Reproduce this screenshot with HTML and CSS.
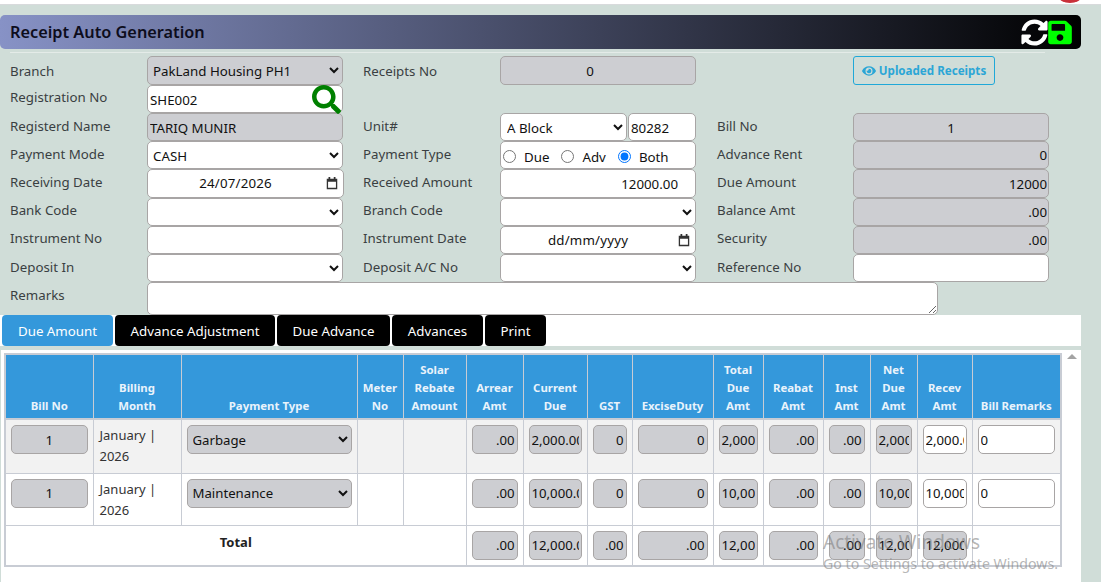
FILE: index.html
```html
<!DOCTYPE html>
<html>
<head>
  <title>Receipt Auto Generation</title>
  <link rel="stylesheet" href="styles.css">
  <meta charset="utf-8">
</head>
<body>
  <div class="topline"><span class="topdot"></span></div>
  <div class="wrap">
    <div class="titlebar">
      <h1>Receipt Auto Generation</h1>
      <div class="titleicons">
        <svg class="ic-sync" viewBox="0 0 512 512"><path d="M370.72 133.28C339.458 104.008 298.888 87.962 255.848 88c-77.458.068-144.328 53.178-162.791 126.85-1.344 5.363-6.122 9.15-11.651 9.15H24.103c-7.498 0-13.194-6.807-11.807-14.176C33.933 94.924 134.813 8 256 8c66.448 0 126.791 26.136 171.315 68.685L463.03 40.97C478.149 25.851 504 36.559 504 57.941V192c0 13.255-10.745 24-24 24H345.941c-21.382 0-32.09-25.851-16.971-40.971l41.75-41.749zM32 296h134.059c21.382 0 32.09 25.851 16.971 40.971l-41.75 41.75c31.262 29.273 71.835 45.319 114.876 45.28 77.418-.07 144.315-53.144 162.787-126.849 1.344-5.363 6.122-9.15 11.651-9.15h57.304c7.498 0 13.194 6.807 11.807 14.176C478.067 417.076 377.187 504 256 504c-66.448 0-126.791-26.136-171.315-68.685L48.97 471.03C33.851 486.149 8 475.441 8 454.059V320c0-13.255 10.745-24 24-24z"/></svg>
        <svg class="ic-save" viewBox="0 0 448 512"><path d="M433.941 129.941l-83.882-83.882A48 48 0 0 0 316.118 32H48C21.49 32 0 53.49 0 80v352c0 26.51 21.49 48 48 48h352c26.51 0 48-21.49 48-48V163.882a48 48 0 0 0-14.059-33.941zM224 416c-35.346 0-64-28.654-64-64 0-35.346 28.654-64 64-64s64 28.654 64 64c0 35.346-28.654 64-64 64zm96-304.52V212c0 6.627-5.373 12-12 12H76c-6.627 0-12-5.373-12-12V108c0-6.627 5.373-12 12-12h228.52c3.183 0 6.235 1.264 8.485 3.515l3.48 3.48A11.996 11.996 0 0 1 320 111.48z"/></svg>
      </div>
    </div>
    <hr class="titlerule">

    <div class="formgrid">
      <label class="top">Branch</label>
      <select class="fld ro top"><option>PakLand Housing PH1</option></select>
      <label class="top mid">Receipts No</label>
      <input class="fld ro center top shiftl" type="text" value="0">
      <span></span>
      <a class="upbtn">
        <svg viewBox="0 0 576 512"><path d="M572.52 241.4C518.29 135.59 410.93 64 288 64S57.68 135.64 3.48 241.41a32.35 32.35 0 0 0 0 29.19C57.71 376.41 165.07 448 288 448s230.32-71.64 284.52-177.41a32.35 32.35 0 0 0 0-29.19zM288 400a144 144 0 1 1 144-144 143.93 143.93 0 0 1-144 144zm0-240a95.31 95.31 0 0 0-25.31 3.79 47.85 47.85 0 0 1-66.9 66.9A95.78 95.78 0 1 0 288 160z"/></svg>
        Uploaded Receipts
      </a>

      <label class="up">Registration No</label>
      <div class="searchbox">
        <input class="fld" type="text" value="SHE002">
        <svg viewBox="0 0 512 512"><path d="M505 442.7L405.3 343c-4.5-4.5-10.6-7-17-7H372c27.6-35.3 44-79.7 44-128C416 93.1 322.9 0 208 0S0 93.1 0 208s93.1 208 208 208c48.3 0 92.7-16.4 128-44v16.3c0 6.4 2.5 12.5 7 17l99.7 99.7c9.4 9.4 24.6 9.4 33.9 0l28.3-28.3c9.4-9.4 9.4-24.6.1-34zM208 336c-70.7 0-128-57.2-128-128 0-70.7 57.2-128 128-128 70.7 0 128 57.2 128 128 0 70.7-57.2 128-128 128z"/></svg>
      </div>
      <span></span><span></span><span></span><span></span>

      <label>Registerd Name</label>
      <input class="fld ro" type="text" value="TARIQ MUNIR">
      <label class="mid">Unit#</label>
      <div class="unitbox">
        <select class="fld"><option>A Block</option></select>
        <input class="fld" type="text" value="80282">
      </div>
      <label class="far">Bill No</label>
      <input class="fld ro center" type="text" value="1">

      <label>Payment Mode</label>
      <select class="fld"><option>CASH</option></select>
      <label class="mid">Payment Type</label>
      <div class="fld radios">
        <input type="radio" name="ptype"><span>Due</span>
        <input type="radio" name="ptype"><span>Adv</span>
        <input type="radio" name="ptype" checked><span>Both</span>
      </div>
      <label class="far">Advance Rent</label>
      <input class="fld ro right" type="text" value="0">

      <label>Receiving Date</label>
      <div class="fld datebox date-wide"><span>24/07/2026</span>
        <svg viewBox="0 0 16 16"><path d="M4 1h2v2h4V1h2v2h2v12H2V3h2zM3.5 6.5v7h9v-7z"/></svg>
      </div>
      <label class="mid">Received Amount</label>
      <input class="fld right pad" type="text" value="12000.00">
      <label class="far">Due Amount</label>
      <input class="fld ro right" type="text" value="12000">

      <label class="up">Bank Code</label>
      <select class="fld"><option></option></select>
      <label class="up mid">Branch Code</label>
      <select class="fld"><option></option></select>
      <label class="up far">Balance Amt</label>
      <input class="fld ro right" type="text" value=".00">

      <label class="up">Instrument No</label>
      <input class="fld" type="text">
      <label class="up mid">Instrument Date</label>
      <div class="fld datebox"><span>dd/mm/yyyy</span>
        <svg viewBox="0 0 16 16"><path d="M4 1h2v2h4V1h2v2h2v12H2V3h2zM3.5 6.5v7h9v-7z"/></svg>
      </div>
      <label class="up far">Security</label>
      <input class="fld ro right" type="text" value=".00">

      <label>Deposit In</label>
      <select class="fld"><option></option></select>
      <label class="mid">Deposit A/C No</label>
      <select class="fld"><option></option></select>
      <label class="far">Reference No</label>
      <input class="fld" type="text">

      <label>Remarks</label>
      <textarea class="fld remarks"></textarea>
    </div>

    <div class="tabs">
      <a class="tab active">Due Amount</a>
      <a class="tab">Advance Adjustment</a>
      <a class="tab">Due Advance</a>
      <a class="tab">Advances</a>
      <a class="tab">Print</a>
    </div>

    <div class="panel">
      <div class="scroller">
        <table class="bills">
          <colgroup>
            <col class="c1"><col class="c2"><col class="c3"><col class="c4"><col class="c5">
            <col class="c6"><col class="c7"><col class="c8"><col class="c9"><col class="c10">
            <col class="c11"><col class="c12"><col class="c13"><col class="c14"><col class="c15">
          </colgroup>
          <thead>
            <tr>
              <th>Bill No</th><th>Billing<br>Month</th><th>Payment Type</th><th>Meter No</th>
              <th>Solar Rebate Amount</th><th>Arrear Amt</th><th>Current Due</th><th>GST</th>
              <th>ExciseDuty</th><th>Total Due Amt</th><th>Reabat Amt</th><th>Inst Amt</th>
              <th>Net Due Amt</th><th>Recev Amt</th><th>Bill Remarks</th>
            </tr>
          </thead>
          <tbody>
            <tr class="odd">
              <td><input class="cell ro center" value="1"></td>
              <td class="month">January | 2026</td>
              <td><select class="cell ro"><option>Garbage</option></select></td>
              <td></td><td></td>
              <td><input class="cell ro right" value=".00"></td>
              <td><input class="cell ro right" value="2,000.00"></td>
              <td><input class="cell ro right" value="0"></td>
              <td><input class="cell ro right" value="0"></td>
              <td><input class="cell ro right" value="2,000.00"></td>
              <td><input class="cell ro right" value=".00"></td>
              <td><input class="cell ro right" value=".00"></td>
              <td><input class="cell ro right" value="2,000.00"></td>
              <td><input class="cell right" value="2,000.00"></td>
              <td><input class="cell" value="0"></td>
            </tr>
            <tr class="even">
              <td><input class="cell ro center" value="1"></td>
              <td class="month">January | 2026</td>
              <td><select class="cell ro"><option>Maintenance</option></select></td>
              <td></td><td></td>
              <td><input class="cell ro right" value=".00"></td>
              <td><input class="cell ro right" value="10,000.00"></td>
              <td><input class="cell ro right" value="0"></td>
              <td><input class="cell ro right" value="0"></td>
              <td><input class="cell ro right" value="10,000.00"></td>
              <td><input class="cell ro right" value=".00"></td>
              <td><input class="cell ro right" value=".00"></td>
              <td><input class="cell ro right" value="10,000.00"></td>
              <td><input class="cell right" value="10,000.00"></td>
              <td><input class="cell" value="0"></td>
            </tr>
            <tr class="totals">
              <td colspan="5" class="totlabel">Total</td>
              <td><input class="cell ro right" value=".00"></td>
              <td><input class="cell ro right" value="12,000.00"></td>
              <td><input class="cell ro right" value=".00"></td>
              <td><input class="cell ro right" value=".00"></td>
              <td><input class="cell ro right" value="12,000.00"></td>
              <td><input class="cell ro right" value=".00"></td>
              <td><input class="cell ro right" value=".00"></td>
              <td><input class="cell ro right" value="12,000.00"></td>
              <td><input class="cell ro right" value="12,000.00"></td>
              <td></td>
            </tr>
          </tbody>
        </table>
        <div class="scrollbar"><span class="uparrow"></span></div>
      </div>
    </div>
  </div>
  <div class="watermark">
    <div class="wm1">Activate Windows</div>
    <div class="wm2">Go to Settings to activate Windows.</div>
  </div>
</body>
</html>
```

FILE: styles.css
```css
html, body {
  margin: 0;
  height: 582px;
  overflow: hidden;
}
body {
  background: #d0ddd8;
  color: #333;
  font-family: "Noto Sans", Arial, sans-serif;
  font-size: 13.3px;
  position: relative;
}
* { box-sizing: border-box; }

.topline {
  height: 5px;
  background: #fff;
  border-bottom: 1px solid #d8dadc;
  position: relative;
  overflow: hidden;
}
.topdot {
  position: absolute;
  left: 1059px;
  top: -9px;
  width: 22px;
  height: 12px;
  border-radius: 50%;
  background: #c9303a;
}

.wrap { width: 1081px; padding-top: 10px; }

.titlebar {
  height: 34px;
  display: flex;
  align-items: center;
  justify-content: space-between;
  padding: 0 9px 0 10px;
  border-radius: 5px;
  background: linear-gradient(to right, #8792c6, #000);
}
.titlebar h1 {
  margin: 0;
  font-size: 16.3px;
  font-weight: 600;
  color: #0d0d1c;
}
.titleicons { display: flex; align-items: center; }
.ic-sync { width: 27px; height: 27px; fill: #fff; }
.ic-save { width: 24px; height: 27px; fill: #0f0; }

.titlerule {
  margin: 3px 36px 0 10px;
  border: 0;
  border-top: 1px solid #e4ebe8;
}

.formgrid {
  display: grid;
  grid-template-columns: 147px 196px 157px 196px 157px 196px;
  grid-template-rows: 29px 28px 28px 28px 29px 28px 28px 28px 33px;
  padding: 3px 0 0 0;
  align-items: stretch;
}
.formgrid label {
  padding-left: 10px;
  line-height: 27px;
  color: #3a3f42;
  white-space: nowrap;
}
.formgrid label.mid { padding-left: 20px; }
.formgrid label.far { padding-left: 21px; }
.formgrid label.top { line-height: 30px; }
.formgrid label.up { line-height: 25px; }

.fld {
  width: 100%;
  min-width: 0;
  height: 100%;
  margin: 0;
  padding: 2px 2px 0;
  background: #fff;
  color: #111;
  border: 1px solid #a8a5a5;
  border-radius: 5px;
  font: inherit;
  font-size: 13.3px;
}
select.fld { padding: 2px 1px 0; }
.fld.top { padding-top: 0; }
.ro { background: #cdced2; }
.center { text-align: center; }
.right { text-align: right; padding-top: 0; padding-right: 1px; }
.pad { padding-right: 17px; }
.shiftl { padding-right: 18px; }

.upbtn {
  display: flex;
  align-items: center;
  justify-content: center;
  gap: 3px;
  width: 142px;
  height: 29px;
  border: 1px solid #1fa8d8;
  border-radius: 3px;
  color: #2ba6d6;
  font-size: 11.6px;
  font-weight: 700;
}
.upbtn svg { width: 14px; height: 14px; fill: #2ba6d6; }

.searchbox { position: relative; }
.searchbox svg {
  position: absolute;
  right: 2px;
  top: 0;
  width: 29px;
  height: 29px;
  fill: #008000;
}

.unitbox { display: flex; gap: 1px; }
.unitbox select { flex: 0 0 127px; width: 127px; padding-left: 2px; }
.unitbox input { flex: 1; }

.radios {
  display: flex;
  align-items: center;
  padding: 0 0 0 2px;
}
.radios input { margin: 2px 8px 0 0; width: 13px; height: 13px; flex: none; }
.radios span { margin-right: 12px; padding-top: 4px; }

.datebox {
  display: flex;
  align-items: center;
  justify-content: center;
  position: relative;
  letter-spacing: .2px;
  padding: 0 20px 0 0;
}
.datebox svg {
  position: absolute;
  right: 4px;
  top: 6px;
  width: 14px;
  height: 14px;
  fill: #333;
}
.date-wide { width: 197px; padding-bottom: 2px; }

.remarks {
  grid-column: 2 / 6;
  width: 791px;
  resize: both;
  display: block;
}

.tabs {
  display: flex;
  gap: 2px;
  height: 31px;
  padding-left: 2px;
  background: #fff;
}
.tab {
  display: flex;
  align-items: center;
  justify-content: center;
  background: #000;
  color: #fff;
  border-radius: 4px;
  font-size: 13.3px;
}
.tab:nth-child(1) { width: 111px; }
.tab:nth-child(2) { width: 160px; }
.tab:nth-child(3) { width: 113px; }
.tab:nth-child(4) { width: 91px; }
.tab:nth-child(5) { width: 61px; }
.tab.active { background: #3498db; }

.panel {
  margin: 4px 0 0 1px;
  height: 240px;
  background: #fff;
}
.scroller {
  display: flex;
  padding: 3px 0 0 3px;
}

.bills {
  width: 1058px;
  flex: none;
  table-layout: fixed;
  border-collapse: collapse;
  border: 2px solid #c8ccd4;
  font-size: 13px;
  align-self: flex-start;
}
.c1 { width: 88px; }
.c2 { width: 88px; }
.c3 { width: 176px; }
.c4 { width: 46px; }
.c5 { width: 63px; }
.c6 { width: 57px; }
.c7 { width: 64px; }
.c8 { width: 45px; }
.c9 { width: 81px; }
.c10 { width: 50px; }
.c11 { width: 60px; }
.c12 { width: 47px; }
.c13 { width: 47px; }
.c14 { width: 55px; }
.c15 { width: 89px; }

.bills th {
  background: #3498db;
  color: #e9f3fb;
  font-size: 11.4px;
  font-weight: 700;
  line-height: 18px;
  padding: 3px 4px 3px;
  height: 65px;
  vertical-align: bottom;
  border: 1px solid #c8ccd4;
  border-bottom-width: 2px;
}
.bills td {
  padding: 5px;
  vertical-align: top;
  border: 1px solid #c8ccd4;
}
.bills .odd td { height: 54px; background: #f2f2f2; }
.bills .even td { height: 52px; }
.bills .totals td { height: 39px; }
.bills .month { line-height: 21px; color: #333; padding: 5px 4px 0 6px; font-size: 13px; }
.totlabel {
  text-align: center;
  font-weight: 700;
  color: #222;
  line-height: 22px;
}

.cell {
  display: block;
  width: 100%;
  height: 29px;
  margin: 0;
  padding: 0 2px;
  background: #fff;
  color: #111;
  border: 1px solid #a8a5a5;
  border-radius: 5px;
  font: inherit;
  font-size: 13.2px;
}
.cell.ro { background: #cdced2; }
select.cell { padding: 0 1px; }

.scrollbar { flex: 1; position: relative; }
.uparrow {
  position: absolute;
  left: 5px;
  top: 1px;
  border-left: 5px solid transparent;
  border-right: 5px solid transparent;
  border-bottom: 5px solid #a3a3a3;
}

.watermark {
  position: absolute;
  left: 823px;
  top: 530px;
  color: rgba(120, 120, 120, .55);
  pointer-events: none;
}
.wm1 { font-size: 19px; line-height: 24px; }
.wm2 { font-size: 14.2px; line-height: 20px; }
```
